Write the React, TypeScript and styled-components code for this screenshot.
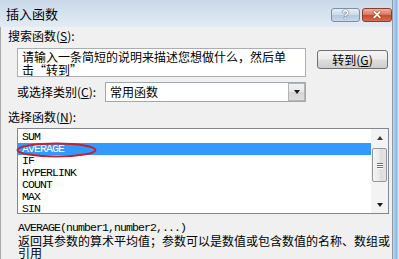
import React from "react";
import styled, { createGlobalStyle } from "styled-components";

const GlobalStyle = createGlobalStyle`
  html, body { margin: 0; padding: 0; background: #f0f0f0; }
  body {
    width: 399px; height: 259px; overflow: hidden;
    font-family: "Noto Sans CJK SC", "Liberation Sans", sans-serif;
    color: #000;
  }
`;

const Window = styled.div`
  display: flex;
  width: 399px;
  height: 259px;
  overflow: hidden;
`;

const Main = styled.div`
  width: 392px;
  display: flex;
  flex-direction: column;
`;

const RightFrame = styled.div`
  width: 7px;
  box-sizing: border-box;
  border-left: 1px solid #8d99a6;
  background: linear-gradient(to right, #c2d8ee, #8fb7dc 60%, #e8f0f8);
`;

const TitleBar = styled.div`
  height: 27px;
  box-sizing: border-box;
  display: flex;
  align-items: flex-start;
  padding-left: 6px;
  background: linear-gradient(#c9d8e9, #d9e5f1 65%, #e3ebf4);
`;

const Title = styled.div`
  font-size: 13px;
  line-height: 16px;
  margin-top: 6px;
`;

const CaptionButtons = styled.div`
  margin-left: auto;
  margin-top: 8px;
  display: flex;
  gap: 2px;
`;

const CaptionButton = styled.div<{ $variant: "help" | "close" }>`
  width: ${(p) => (p.$variant === "help" ? 29 : 30)}px;
  height: 14px;
  box-sizing: border-box;
  border-radius: 3px;
  display: flex;
  align-items: center;
  justify-content: center;
  font-family: "Liberation Sans", sans-serif;
  font-weight: bold;
  font-size: 12px;
  line-height: 12px;
  color: #fff;
  border: 1px solid ${(p) => (p.$variant === "help" ? "#7d8fa5" : "#8e3a2c")};
  background: ${(p) =>
    p.$variant === "help"
      ? "linear-gradient(#e6eef7, #cbd9e9 50%, #b5c8de 51%, #c9d9ea)"
      : "linear-gradient(#eab3a5, #d9735d 50%, #c44a30 51%, #d66e52)"};
  text-shadow: ${(p) =>
    p.$variant === "help"
      ? "0 0 1px #3a4a5e, 0 0 1px #3a4a5e"
      : "0 0 1px #5a1a10, 0 0 1px #5a1a10"};
`;

const Body = styled.div`
  flex: 1;
  background: #f0f0f0;
  border-left: 1px solid #a9a9a9;
  padding: 2px 0 0 7px;
  display: flex;
  flex-direction: column;
  align-items: flex-start;
`;

const Label = styled.div<{ $indent?: boolean; $gap?: number }>`
  font-size: 12px;
  line-height: 14px;
  white-space: nowrap;
  margin-left: ${(p) => (p.$indent ? 9 : 0)}px;
  margin-top: ${(p) => p.$gap ?? 0}px;
  u { text-decoration: underline; }
`;

const SearchRow = styled.div`
  display: flex;
  align-items: flex-start;
  margin: 5px 0 0 9px;
`;

const SearchBox = styled.div`
  width: 289px;
  height: 29px;
  box-sizing: border-box;
  border: 1px solid #abadb3;
  background: #fff;
  padding: 1px 4px;
  font-size: 12px;
  line-height: 13px;
  overflow: hidden;
`;

const GoButton = styled.div`
  margin: 2px 0 0 11px;
  width: 71px;
  height: 19px;
  box-sizing: border-box;
  border: 1px solid #707070;
  border-radius: 3px;
  background: linear-gradient(#f4f4f4, #ebebeb 48%, #dddddd 52%, #cfcfcf);
  display: flex;
  align-items: center;
  justify-content: center;
  font-size: 12px;
  line-height: 14px;
  u { text-decoration: underline; }
`;

const CategoryRow = styled.div`
  display: flex;
  align-items: center;
  height: 20px;
  margin: 5px 0 0 9px;
`;

const CategoryLabel = styled(Label)`
  width: 88px;
`;

const Select = styled.div`
  width: 201px;
  height: 20px;
  box-sizing: border-box;
  border: 1px solid #a2a8b0;
  background: #fff;
  display: flex;
`;

const SelectValue = styled.div`
  flex: 1;
  padding-left: 4px;
  font-size: 12px;
  line-height: 18px;
`;

const DropButton = styled.div`
  width: 17px;
  height: 18px;
  box-sizing: border-box;
  border: 1px solid #b4b4b4;
  background: linear-gradient(#f2f2f2, #e6e6e6 50%, #d6d6d6 51%, #dedede);
  display: flex;
  align-items: center;
  justify-content: center;
`;

const Arrow = styled.div<{ $up?: boolean }>`
  width: 0;
  height: 0;
  border-left: 3.5px solid transparent;
  border-right: 3.5px solid transparent;
  ${(p) =>
    p.$up
      ? "border-bottom: 4px solid #3c3c3c;"
      : "border-top: 4px solid #1a1a1a;"}
`;

const ListWrap = styled.div`
  position: relative;
  margin: 4px 0 0 9px;
  width: 372px;
  height: 86px;
  box-sizing: border-box;
  border: 1px solid #828790;
  background: #fff;
  display: flex;
`;

const Items = styled.div`
  flex: 1;
  padding-top: 2px;
  overflow: hidden;
`;

const Item = styled.div<{ $selected?: boolean }>`
  height: 12px;
  line-height: 12px;
  padding-left: 4px;
  font-family: "Liberation Mono", monospace;
  font-size: 11.5px;
  letter-spacing: -0.9px;
  white-space: nowrap;
  background: ${(p) => (p.$selected ? "#3399ff" : "transparent")};
  color: ${(p) => (p.$selected ? "#fff" : "#000")};
`;

const ScrollBar = styled.div`
  width: 17px;
  background: #f3f3f3;
  display: flex;
  flex-direction: column;
  align-items: stretch;
`;

const ScrollArrow = styled.div`
  height: 17px;
  display: flex;
  align-items: center;
  justify-content: center;
`;

const Thumb = styled.div`
  margin: 2px 1px 0 1px;
  height: 34px;
  box-sizing: border-box;
  border: 1px solid #979797;
  border-radius: 2px;
  background: linear-gradient(to right, #f6f6f6, #e8e8e8 50%, #dcdcdc 51%, #e4e4e4);
  display: flex;
  flex-direction: column;
  align-items: center;
  justify-content: center;
  gap: 1px;
`;

const Grip = styled.div`
  width: 6px;
  height: 1px;
  background: #707070;
  box-shadow: 0 1px 0 #fbfbfb;
`;

const Spacer = styled.div`
  flex: 1;
`;

const Marker = styled.svg`
  position: absolute;
  left: -2px;
  top: 13px;
  pointer-events: none;
`;

const Syntax = styled.div`
  margin: 8px 0 0 10px;
  font-family: "Liberation Mono", monospace;
  font-size: 11.5px;
  letter-spacing: -0.9px;
  line-height: 12px;
  white-space: nowrap;
`;

const Description = styled.div`
  margin: 1px 0 0 10px;
  width: 374px;
  font-size: 12px;
  line-height: 12px;
`;

const functions = ["SUM", "AVERAGE", "IF", "HYPERLINK", "COUNT", "MAX", "SIN"];

export default function App() {
  return (
    <>
      <GlobalStyle />
      <Window>
        <Main>
          <TitleBar>
            <Title>插入函数</Title>
            <CaptionButtons>
              <CaptionButton $variant="help">?</CaptionButton>
              <CaptionButton $variant="close">✕</CaptionButton>
            </CaptionButtons>
          </TitleBar>
          <Body>
            <Label>
              搜索函数(<u>S</u>):
            </Label>
            <SearchRow>
              <SearchBox>请输入一条简短的说明来描述您想做什么，然后单击“转到”</SearchBox>
              <GoButton>
                转到(<u>G</u>)
              </GoButton>
            </SearchRow>
            <CategoryRow>
              <CategoryLabel>
                或选择类别(<u>C</u>):
              </CategoryLabel>
              <Select>
                <SelectValue>常用函数</SelectValue>
                <DropButton>
                  <Arrow />
                </DropButton>
              </Select>
            </CategoryRow>
            <Label $gap={8}>
              选择函数(<u>N</u>):
            </Label>
            <ListWrap>
              <Items>
                {functions.map((f) => (
                  <Item key={f} $selected={f === "AVERAGE"}>
                    {f}
                  </Item>
                ))}
              </Items>
              <ScrollBar>
                <ScrollArrow>
                  <Arrow $up />
                </ScrollArrow>
                <Thumb>
                  <Grip />
                  <Grip />
                  <Grip />
                </Thumb>
                <Spacer />
                <ScrollArrow>
                  <Arrow />
                </ScrollArrow>
              </ScrollBar>
              <Marker width="81" height="16" viewBox="0 0 81 16">
                <ellipse cx="40.5" cy="8" rx="39" ry="6.5" fill="none" stroke="#c0242c" strokeWidth="2" />
              </Marker>
            </ListWrap>
            <Syntax>AVERAGE(number1,number2,...)</Syntax>
            <Description>返回其参数的算术平均值；参数可以是数值或包含数值的名称、数组或引用</Description>
          </Body>
        </Main>
        <RightFrame />
      </Window>
    </>
  );
}
